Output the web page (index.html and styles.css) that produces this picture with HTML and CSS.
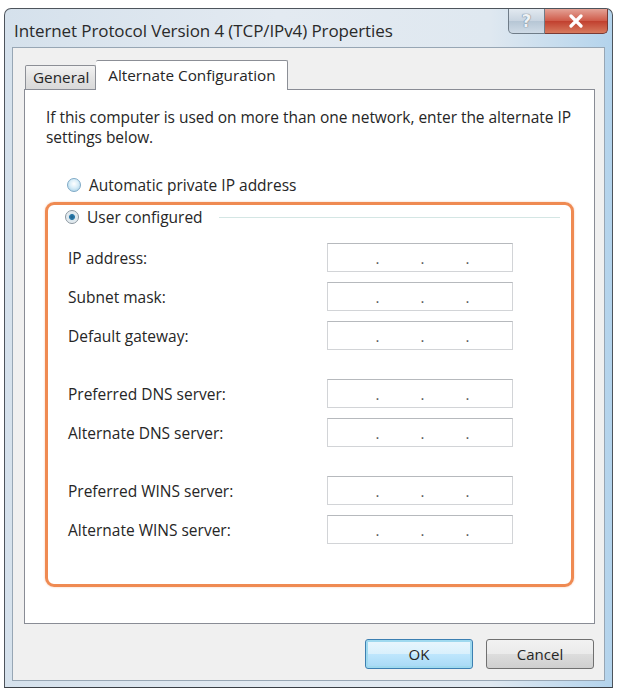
FILE: index.html
```html
<!DOCTYPE html>
<html lang="en">
<head>
    <meta charset="UTF-8">
    <title>Internet Protocol Version 4 (TCP/IPv4) Properties</title>
    <link rel="stylesheet" href="styles.css">
</head>
<body>
    <div class="window">
        <div class="titlebar">
            <span class="title">Internet Protocol Version 4 (TCP/IPv4) Properties</span>
            <div class="caption-btns">
                <div class="cap-btn help">?</div>
                <div class="cap-btn close">
                    <svg width="18" height="14" viewBox="0 0 18 14">
                        <path d="M4 2 L14 12 M14 2 L4 12" stroke="#ffffff" stroke-width="3.2" stroke-linecap="round"/>
                    </svg>
                </div>
            </div>
        </div>
        <div class="client">
            <div class="tabs">
                <div class="tab">General</div>
                <div class="tab active">Alternate Configuration</div>
            </div>
            <div class="panel">
                <p class="intro">If this computer is used on more than one network, enter the alternate IP settings below.</p>
                <div class="radio-row auto">
                    <span class="radio"></span>
                    <span>Automatic private IP address</span>
                </div>
                <div class="highlight">
                    <div class="radio-row legend">
                        <span class="radio checked"></span>
                        <span>User configured</span>
                    </div>
                    <div class="fields">
                        <div class="field">
                            <label>IP address:</label>
                            <div class="ipbox"><span>.</span><span>.</span><span>.</span></div>
                        </div>
                        <div class="field">
                            <label>Subnet mask:</label>
                            <div class="ipbox"><span>.</span><span>.</span><span>.</span></div>
                        </div>
                        <div class="field">
                            <label>Default gateway:</label>
                            <div class="ipbox"><span>.</span><span>.</span><span>.</span></div>
                        </div>
                    </div>
                    <div class="fields">
                        <div class="field">
                            <label>Preferred DNS server:</label>
                            <div class="ipbox"><span>.</span><span>.</span><span>.</span></div>
                        </div>
                        <div class="field">
                            <label>Alternate DNS server:</label>
                            <div class="ipbox"><span>.</span><span>.</span><span>.</span></div>
                        </div>
                    </div>
                    <div class="fields">
                        <div class="field">
                            <label>Preferred WINS server:</label>
                            <div class="ipbox"><span>.</span><span>.</span><span>.</span></div>
                        </div>
                        <div class="field">
                            <label>Alternate WINS server:</label>
                            <div class="ipbox"><span>.</span><span>.</span><span>.</span></div>
                        </div>
                    </div>
                </div>
            </div>
            <div class="actions">
                <button class="btn default">OK</button>
                <button class="btn">Cancel</button>
            </div>
        </div>
    </div>
</body>
</html>
```

FILE: styles.css
```css
* {
    margin: 0;
    padding: 0;
    box-sizing: border-box;
}

body {
    background-color: #ffffff;
    font-family: 'Open Sans', 'DejaVu Sans', sans-serif;
    font-size: 15.5px;
    color: #262626;
}

.window {
    margin: 8px 0 0 4px;
    width: 609px;
    height: 680px;
    border: 1px solid #4d545c;
    border-bottom-color: #3a3f45;
    border-radius: 7px 7px 0 0;
    background: linear-gradient(to right, #d5e1ec 0%, #e3eaf1 45%, #dfe8f0 80%, #b3d3ec 100%);
    display: flex;
    flex-direction: column;
    padding: 0 7px 6px 7px;
}

.titlebar {
    height: 38px;
    display: flex;
    align-items: flex-start;
    justify-content: space-between;
}

.title {
    margin-top: 10px;
    padding-left: 2px;
    font-size: 17px;
    color: #2a2a2a;
    letter-spacing: -0.1px;
}

.caption-btns {
    display: flex;
    margin-right: -3px;
}

.cap-btn {
    height: 25px;
    display: flex;
    align-items: center;
    justify-content: center;
    border: 1px solid #6f7c88;
    border-top: none;
}

.cap-btn.help {
    width: 37px;
    border-radius: 0 0 0 5px;
    background: linear-gradient(#e2e9f0, #c8d4e0 50%, #b6c6d5 51%, #cfdbe6);
    color: #eef2f6;
    font-size: 17px;
    font-weight: bold;
    font-family: 'DejaVu Sans', sans-serif;
    text-shadow: 0 0 1px #6a7886, 0 0 1px #6a7886;
}

.cap-btn.close {
    width: 63px;
    border-left: none;
    border-color: #7a3a34;
    border-radius: 0 0 5px 0;
    background: linear-gradient(#e4a296, #cf5a48 50%, #c1402f 51%, #d77a5e);
}

.client {
    flex: 1;
    background-color: #f0f0f0;
    border: 1px solid #97a6b4;
    display: flex;
    flex-direction: column;
    padding: 12px 9px 0 11px;
}

.tabs {
    display: flex;
    align-items: flex-end;
    height: 29px;
    padding-left: 1px;
    position: relative;
    z-index: 1;
}

.tab {
    height: 24px;
    padding: 0 6px 0 7px;
    border: 1px solid #8c8f96;
    border-bottom: none;
    background: linear-gradient(#f3f3f3, #e3e3e3 50%, #d9d9d9);
    font-size: 15.3px;
    line-height: 23px;
    border-radius: 2px 2px 0 0;
}

.tab.active {
    height: 30px;
    padding: 0 11px 0 12px;
    background: #ffffff;
    border-left: none;
    margin-bottom: -1px;
    line-height: 28px;
}

.panel {
    height: 535px;
    background-color: #ffffff;
    border: 1px solid #898c95;
    padding: 17px 20px 0 20px;
}

.intro {
    padding-left: 1px;
    margin-right: -14px;
    line-height: 20px;
    letter-spacing: -0.05px;
}

.radio-row {
    display: flex;
    align-items: center;
    gap: 8px;
}

.radio-row.auto {
    margin-top: 27px;
    padding-left: 22px;
}

.radio {
    width: 14px;
    height: 14px;
    border-radius: 50%;
    border: 1px solid #7ea9c6;
    background: radial-gradient(circle at 50% 40%, #ffffff 0%, #d9eef8 45%, #9fcbe4 100%);
    flex-shrink: 0;
}

.radio.checked {
    border-color: #8a969f;
    background: radial-gradient(circle, #1d5f8a 0%, #2e7cac 30%, #dbe6ec 40%, #f2f5f7 100%);
}

.highlight {
    margin-top: 6px;
    height: 385px;
    border: 3px solid #ef8a52;
    border-radius: 9px;
    padding: 2px 16px 0 17px;
    box-shadow: 0 0 2px rgba(239, 138, 82, 0.5);
}

.radio-row.legend {
    height: 20px;
    padding-left: 0;
}

.radio-row.legend::after {
    content: "";
    flex: 1;
    margin-left: 8px;
    margin-right: -5px;
    border-top: 1px solid #d4e6e4;
}

.fields {
    display: flex;
    flex-direction: column;
    gap: 10px;
    margin-top: 29px;
}

.radio-row.legend + .fields {
    margin-top: 16px;
}

.field {
    display: flex;
    align-items: center;
    justify-content: space-between;
    padding-left: 3px;
    padding-right: 42px;
}

.ipbox {
    width: 186px;
    height: 29px;
    border: 1px solid #d2d4d7;
    border-top-color: #b6b9bd;
    background: #ffffff;
    display: flex;
    padding-left: 27px;
    padding-top: 4px;
    color: #555;
    font-size: 15px;
}

.ipbox span {
    width: 45px;
    text-align: center;
}

.actions {
    display: flex;
    justify-content: flex-end;
    gap: 13px;
    padding-top: 15px;
    padding-right: 1px;
}

.btn {
    width: 108px;
    height: 30px;
    border: 1px solid #707070;
    border-radius: 3px;
    background: linear-gradient(#f2f2f2, #ebebeb 50%, #dddddd 51%, #cfcfcf);
    font-family: 'Open Sans', 'DejaVu Sans', sans-serif;
    font-size: 15px;
    color: #262626;
}

.btn.default {
    border-color: #3c7fb1;
    box-shadow: inset 0 0 0 2px #9fd9ef;
    background: linear-gradient(#eaf6fd, #d9f0fc 50%, #bee6fd 51%, #a7d9f5);
}
```
